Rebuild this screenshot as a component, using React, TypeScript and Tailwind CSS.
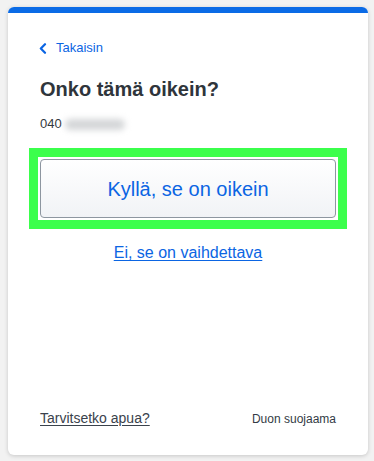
import React from "react";

export default function App() {
  return (
    <div
      className="w-[374px] h-[461px] bg-[#f2f2f2] pl-2 pt-[7px]"
      style={{ fontFamily: '"Liberation Sans", Arial, sans-serif' }}
    >
      <div className="w-[360px] h-[448px] bg-white rounded-[6px] overflow-hidden shadow-[0_1px_4px_rgba(0,0,0,0.18)] flex flex-col">
        <div className="h-[6px] bg-[#0b6be6]" />
        <div className="flex flex-col flex-1 px-8 pt-[27px] pb-[26px]">
          <a className="flex items-center text-[13px] leading-[16px] text-[#0b65e3] h-4">
            <svg width="8" height="11" viewBox="0 0 8 11" className="-ml-[1px] mr-[9px]">
              <path d="M6 1.2 L1.8 5.5 L6 9.8" fill="none" stroke="#0b65e3" strokeWidth="2.2" strokeLinecap="round" strokeLinejoin="round" />
            </svg>
            <span>Takaisin</span>
          </a>
          <h1 className="mt-[21px] text-[20px] leading-[24px] font-bold text-[#2f353b]">
            Onko tämä oikein?
          </h1>
          <div className="mt-[15px] flex items-center text-[13px] leading-[16px] text-[#333a40]">
            <span>040</span>
            <span className="ml-[3px] w-[60px] h-[11px] rounded-full bg-[#d4d6d8] blur-[3px]" />
          </div>
          <div className="mt-4 -mx-[11px] border-[9px] border-[#3bff4c] p-[2px] bg-white">
            <button className="w-full h-[59px] rounded-[4px] border border-[#8d96a0] bg-gradient-to-b from-white to-[#f1f3f6] text-[20px] text-[#0b65e3] flex items-center justify-center">
              Kyllä, se on oikein
            </button>
          </div>
          <div className="mt-[14px] flex justify-center">
            <a className="text-[16px] leading-[20px] text-[#0b65e3] underline underline-offset-[2px]">
              Ei, se on vaihdettava
            </a>
          </div>
          <div className="mt-auto flex items-baseline justify-between">
            <a className="text-[14px] leading-[20px] text-[#3a424c] underline underline-offset-[2px]">
              Tarvitsetko apua?
            </a>
            <span className="text-[12px] leading-[20px] text-[#333b45]">Duon suojaama</span>
          </div>
        </div>
      </div>
    </div>
  );
}
